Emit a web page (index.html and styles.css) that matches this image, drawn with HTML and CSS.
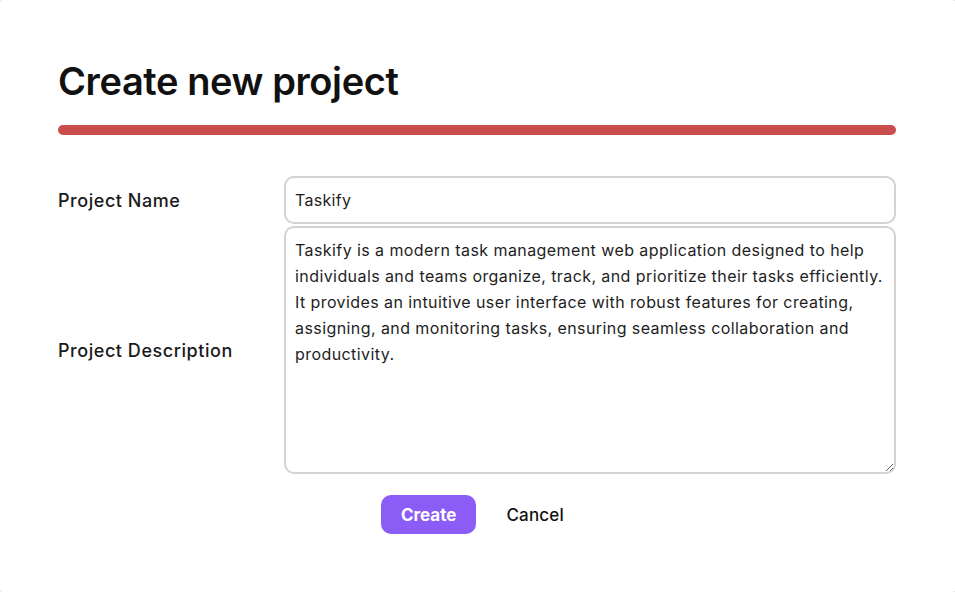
FILE: index.html
```html
<!DOCTYPE html>
<html lang="en">
<head>
<meta charset="utf-8">
<title>Create new project</title>
<link rel="stylesheet" href="styles.css">
</head>
<body>
<div class="dialog">
  <h1 class="title">Create new project</h1>
  <div class="rule"></div>
  <form class="form">
    <label class="label" for="pname">Project Name</label>
    <input class="input" id="pname" type="text" value="Taskify">
    <label class="label" for="pdesc">Project Description</label>
    <textarea class="textarea" id="pdesc">Taskify is a modern task management web application designed to help individuals and teams organize, track, and prioritize their tasks efficiently. It provides an intuitive user interface with robust features for creating, assigning, and monitoring tasks, ensuring seamless collaboration and productivity.</textarea>
    <div class="actions">
      <button type="button" class="btn btn-primary">Create</button>
      <button type="button" class="btn btn-link">Cancel</button>
    </div>
  </form>
</div>
</body>
</html>
```
FILE: styles.css
```css
* { box-sizing: border-box; }
html, body { margin: 0; height: 100%; }
body {
  background: #d4d4d4;
  font-family: Inter, "Liberation Sans", sans-serif;
  color: #151515;
}
.dialog {
  background: #fff;
  height: 592px;
  width: 955px;
  border-radius: 2px;
  padding: 58px 59px 0 58px;
}
.title {
  margin: 0;
  font-size: 38px;
  font-weight: 600;
  line-height: 46px;
  letter-spacing: -0.4px;
  color: #111;
}
.rule {
  margin-top: 21px;
  height: 10px;
  border-radius: 5px;
  background: #c84d4b;
}
.form {
  margin-top: 41px;
  display: grid;
  grid-template-columns: 226px 1fr;
  row-gap: 2px;
  align-items: center;
}
.label {
  font-size: 18px;
  font-weight: 500;
  letter-spacing: 0.55px;
  color: #1a1a1a;
}
.input, .textarea {
  font-family: inherit;
  font-size: 16px;
  color: #1e1e1e;
  border: 2px solid #d3d3d3;
  border-radius: 10px;
  background: #fff;
  padding: 0 9px;
  width: 100%;
}
.input { height: 48px; letter-spacing: 0.3px; }
.textarea {
  height: 248px;
  padding: 9px 9px;
  line-height: 26px;
  letter-spacing: 0.42px;
  resize: vertical;
}
.actions {
  grid-column: 1 / -1;
  display: flex;
  justify-content: center;
  align-items: center;
  gap: 10px;
  margin-top: 19px;
  padding-left: 11px;
}
.btn {
  font-family: inherit;
  font-size: 17px;
  font-weight: 700;
  border: none;
  border-radius: 10px;
  height: 39px;
  padding: 0 20px;
  cursor: pointer;
}
.btn-primary { background: #8b5cf6; color: #fff; }
.btn-link { background: transparent; color: #111; font-weight: 500; letter-spacing: 0.2px; }
```
